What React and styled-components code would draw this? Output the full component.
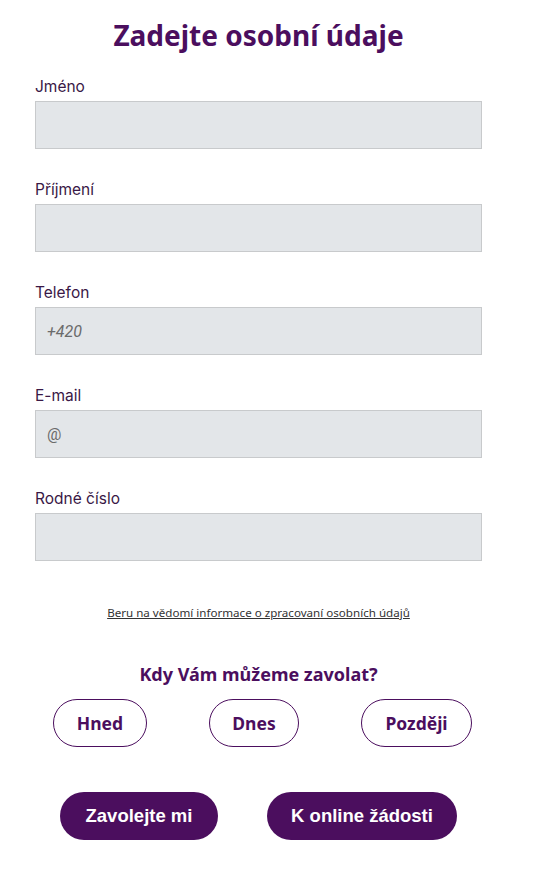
import React, { useState } from 'react';
import styled, { createGlobalStyle } from 'styled-components';

const GlobalStyle = createGlobalStyle`
  body {
    margin: 0;
    background: #fff;
    font-family: 'Open Sans', 'Liberation Sans', sans-serif;
  }
`;

const Wrapper = styled.div`
  width: 447px;
  margin-left: 35px;
  padding-top: 16px;
  padding-bottom: 30px;
`;

const Title = styled.h1`
  margin: 0 0 23px;
  text-align: center;
  font-family: 'Noto Sans', sans-serif;
  font-size: 28px;
  font-weight: 700;
  color: #4b0e5e;
  line-height: 38px;
`;

const Form = styled.form`
  display: flex;
  flex-direction: column;
  gap: 31px;
`;

const Field = styled.label`
  display: flex;
  flex-direction: column;
  gap: 4px;
`;

const Label = styled.span`
  font-family: 'Inter', sans-serif;
  font-size: 15.5px;
  line-height: 20px;
  color: #3a1846;
`;

const Input = styled.input`
  box-sizing: border-box;
  height: 48px;
  width: 100%;
  padding: 0 11px;
  background: #e3e6e9;
  border: 1px solid #c8cacc;
  border-radius: 0;
  font-family: 'Roboto', sans-serif;
  font-size: 16px;
  color: #333;
  outline: none;

  &::placeholder {
    color: #6b6b6b;
    font-style: ${({ $italic }) => ($italic ? 'italic' : 'normal')};
  }
`;

const Consent = styled.a`
  display: block;
  margin-top: 44px;
  text-align: center;
  font-family: 'Noto Sans', sans-serif;
  font-size: 11.6px;
  color: #333;
  text-decoration: underline;
`;

const Question = styled.h2`
  margin: 42px 0 13px;
  text-align: center;
  font-family: 'Noto Sans', sans-serif;
  font-size: 18px;
  font-weight: 700;
  color: #4b0e5e;
`;

const ChoiceRow = styled.div`
  display: flex;
  justify-content: space-between;
  padding: 0 10px 0 18px;
`;

const Choice = styled.button`
  height: 48px;
  width: ${({ $w }) => $w}px;
  border: 1px solid #4b0e5e;
  border-radius: 24px;
  background: ${({ $active }) => ($active ? '#f3ecf6' : '#fff')};
  font-family: 'Noto Sans', sans-serif;
  font-size: 17.5px;
  font-weight: 700;
  color: #4b0e5e;
  cursor: pointer;
`;

const ActionRow = styled.div`
  display: flex;
  justify-content: center;
  gap: 49px;
  margin-top: 45px;
`;

const Action = styled.button`
  height: 48px;
  width: ${({ $w }) => $w}px;
  border: none;
  border-radius: 24px;
  background: #4b0e5e;
  font-family: 'Liberation Sans', sans-serif;
  font-size: 18.5px;
  font-weight: 700;
  color: #fff;
  cursor: pointer;
`;

const fields = [
  { id: 'name', label: 'Jméno' },
  { id: 'surname', label: 'Příjmení' },
  { id: 'phone', label: 'Telefon', placeholder: '+420', italic: true },
  { id: 'email', label: 'E-mail', placeholder: '@' },
  { id: 'birth', label: 'Rodné číslo' },
];

const choices = [
  { id: 'now', label: 'Hned', w: 94 },
  { id: 'today', label: 'Dnes', w: 90 },
  { id: 'later', label: 'Později', w: 111 },
];

const App = () => {
  const [when, setWhen] = useState(null);

  return (
    <>
      <GlobalStyle />
      <Wrapper>
        <Title>Zadejte osobní údaje</Title>
        <Form onSubmit={e => e.preventDefault()} autoComplete="off">
          {fields.map(f => (
            <Field key={f.id}>
              <Label>{f.label}</Label>
              <Input placeholder={f.placeholder} $italic={f.italic} />
            </Field>
          ))}
        </Form>
        <Consent href="#">Beru na vědomí informace o zpracovaní osobních údajů</Consent>
        <Question>Kdy Vám můžeme zavolat?</Question>
        <ChoiceRow>
          {choices.map(c => (
            <Choice key={c.id} $w={c.w} $active={when === c.id} onClick={() => setWhen(c.id)}>
              {c.label}
            </Choice>
          ))}
        </ChoiceRow>
        <ActionRow>
          <Action $w={158}>Zavolejte mi</Action>
          <Action $w={190}>K online žádosti</Action>
        </ActionRow>
      </Wrapper>
    </>
  );
};

export default App;
